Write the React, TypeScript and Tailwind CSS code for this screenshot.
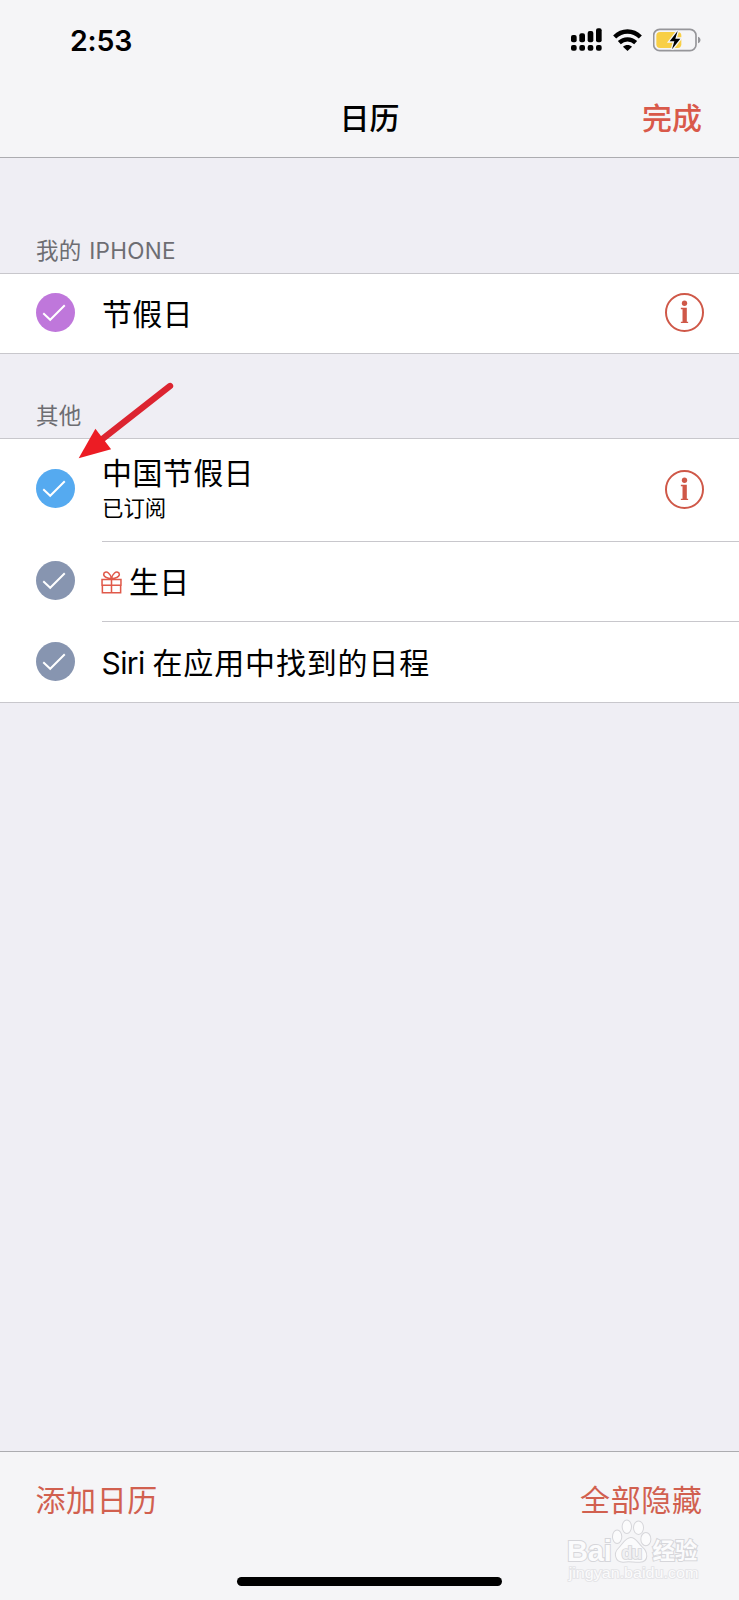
import type { ReactNode } from "react";

const CheckCircle = ({ className }: { className: string }) => {
  return (
    <svg viewBox="0 0 118 118" className={`size-[39px] shrink-0 ${className}`}>
      <circle cx="59" cy="59" r="59" fill="currentColor" />
      <path
        d="M22 61 L43 81 L87 37"
        fill="none"
        stroke="#fff"
        strokeWidth="6"
      />
    </svg>
  );
};

const InfoIcon = () => {
  return (
    <svg viewBox="0 0 118 118" className="size-[39px] text-[#cf5848]">
      <circle
        cx="59"
        cy="59"
        r="56"
        fill="none"
        stroke="currentColor"
        strokeWidth="6"
      />
      <g fill="currentColor">
        <circle cx="59" cy="31" r="8" />
        <path d="M48 45 H66 V87 H70 V91 H48 V87 H53 V49 H48 Z" />
      </g>
    </svg>
  );
};

const GiftIcon = () => {
  return (
    <svg
      viewBox="0 0 62 68"
      className="w-[21px] h-[23px] -ml-px mt-px text-[#e0594a]"
      fill="none"
      stroke="currentColor"
      strokeWidth="4.5"
    >
      <path d="M3 25 H59 V42 H3 Z M4 42 V64 H58 V42 M31 25 V64" />
      <path d="M31 23 C22 22 10 20 8 12 C7 3 16 1 22 6 C27 10 30 17 31 23 C32 17 35 10 40 6 C46 1 55 3 54 12 C52 20 40 22 31 23 Z" />
    </svg>
  );
};

const StatusBar = () => {
  return (
    <div className="h-[78px] pl-[70px] pr-[38px] pt-[28px] flex justify-between items-start">
      <span className="font-['Inter'] text-[28.5px] leading-[26px] font-semibold tracking-[-0.2px]">
        2:53
      </span>
      <div className="flex">
        <svg viewBox="60 54 99 72" className="w-[33px] h-6 mr-[10px]">
          <rect x="63" y="75" width="17" height="22" rx="6" />
          <rect x="88" y="70" width="17" height="27" rx="6" />
          <rect x="113" y="63" width="17" height="34" rx="6" />
          <rect x="138" y="55" width="17" height="42" rx="6" />
          <rect x="63" y="105" width="17" height="17" rx="6" />
          <rect x="88" y="105" width="17" height="17" rx="6" />
          <rect x="113" y="105" width="17" height="17" rx="6" />
          <rect x="138" y="105" width="17" height="17" rx="6" />
        </svg>
        <svg
          viewBox="189 54 87 72"
          className="w-[29px] h-6 mr-[11px]"
          fill="none"
          stroke="#000"
          strokeWidth="13"
        >
          <path d="M194 81 C216 59 249 59 271 81" />
          <path d="M208 98 C222 85 243 85 257 98" />
          <path
            d="M219 110 C226 103 239 103 246 110 L232.500 123 Z"
            fill="#000"
            stroke="none"
          />
        </svg>
        <svg viewBox="309 54 144 72" className="w-12 h-6">
          <rect
            x="311"
            y="58"
            width="127"
            height="64"
            rx="18"
            fill="none"
            stroke="#96969a"
            strokeWidth="5"
          />
          <rect x="319" y="66" width="75" height="48" rx="11" fill="#f8cf46" />
          <path d="M444 80 C454 83 454 97 444 100 Z" fill="#96969a" />
          <path
            d="M383 63 L359 94 H373 L366 118 L391 86 H376 Z"
            stroke="#f5f5f7"
            strokeWidth="8"
            paintOrder="stroke"
          />
        </svg>
      </div>
    </div>
  );
};

const SectionTitle = ({
  className,
  children,
}: {
  className: string;
  children: ReactNode;
}) => {
  return (
    <h2
      className={`pl-9 flex items-end text-[22.5px] leading-8 tracking-[0.3px] text-[#6d6d72] ${className}`}
    >
      {children}
    </h2>
  );
};

// watermark in the bottom right corner
const Watermark = () => {
  return (
    <svg
      viewBox="75 235 410 200"
      className="absolute left-[565px] top-[1518px] w-[137px] h-[67px]"
      fill="#fbfbfc"
      stroke="#d6d6da"
      strokeWidth="3"
    >
      <ellipse cx="231" cy="291" rx="14" ry="20" />
      <ellipse cx="260" cy="261" rx="14" ry="20" />
      <ellipse cx="295" cy="264" rx="15" ry="20" />
      <ellipse cx="317" cy="298" rx="15" ry="20" />
      <path d="M272 293 C287 293 292 308 306 321 C323 335 328 366 299 367 C281 368 268 364 250 367 C224 368 220 340 234 326 C248 312 256 293 272 293 Z" />
      <g
        fontFamily="'Liberation Sans', 'Noto Sans CJK SC', sans-serif"
        fontWeight="bold"
        paintOrder="stroke"
        strokeWidth="6"
      >
        <text x="81" y="364" fontSize="87" textLength="134">
          Bai
        </text>
        <text
          x="244"
          y="357"
          fontSize="54"
          textLength="62"
          fill="#f0f0f2"
          strokeWidth="5"
        >
          du
        </text>
        <text x="337" y="358" fontSize="67" textLength="134">
          经验
        </text>
      </g>
      <text
        x="86"
        y="414"
        fontSize="45"
        textLength="388"
        lengthAdjust="spacingAndGlyphs"
        fontFamily="'Liberation Sans', sans-serif"
        paintOrder="stroke"
        stroke="#e3e3e6"
        strokeWidth="5"
      >
        jingyan.baidu.com
      </text>
    </svg>
  );
};

const App = () => {
  return (
    <div className="relative w-[739px] h-[1600px] overflow-hidden flex flex-col bg-[#efeef4] text-black font-['Inter','Noto_Sans_CJK_SC',sans-serif]">
      <header className="h-[158px] shrink-0 bg-[#f5f5f7] border-b border-[#acacb0]">
        <StatusBar />
        <div className="h-[79px] px-[37px] grid grid-cols-3 items-center text-[30px] leading-10 font-medium">
          <span></span>
          <h1 className="text-center">日历</h1>
          <button className="text-right text-[#d9594a]">完成</button>
        </div>
      </header>

      <main className="grow">
        <SectionTitle className="h-[115px] pb-[6px]">
          我的&nbsp;<span className="pl-px">IPHONE</span>
        </SectionTitle>
        <div className="h-[81px] bg-white border-y border-[#c8c7cc] pl-[35.5px] pr-[35.5px] pb-[2px] flex items-center">
          <CheckCircle className="text-[#bf77db]" />
          <span className="grow pl-[27.5px] pt-[2px] text-[30px] leading-10 tracking-[0.3px]">
            节假日
          </span>
          <InfoIcon />
        </div>

        <SectionTitle className="h-[84px] pb-[6px]">其他</SectionTitle>
        <ul className="bg-white border-y border-[#c8c7cc]">
          <li className="h-[103px] pl-[35.5px] flex">
            <CheckCircle className="mt-[29.5px] text-[#55aaf0]" />
            <div className="grow ml-[27.5px] pr-[35.5px] pb-px border-b border-[#c8c7cc] flex justify-between items-center">
              <div>
                <p className="text-[30px] leading-9 tracking-[0.4px]">
                  中国节假日
                </p>
                <p className="text-[21.4px] leading-[34px]">已订阅</p>
              </div>
              <InfoIcon />
            </div>
          </li>
          <li className="h-20 pl-[35.5px] flex">
            <CheckCircle className="mt-[19px] text-[#8795b0]" />
            <div className="grow ml-[27.5px] border-b border-[#c8c7cc] flex items-center">
              <GiftIcon />
              <span className="pl-[7px] text-[30px] leading-10 tracking-[0.3px]">
                生日
              </span>
            </div>
          </li>
          <li className="h-20 pl-[35.5px] pb-px flex items-center">
            <CheckCircle className="text-[#8795b0]" />
            <span className="pl-[27px] pt-[2px] text-[30px] leading-10 tracking-[0.85px]">
              <span className="tracking-[-0.6px]">Siri </span>
              在应用中找到的日程
            </span>
          </li>
        </ul>
      </main>

      <footer className="h-[149px] shrink-0 bg-[#f5f5f7] border-t border-[#acacb0] flex flex-col justify-between items-center">
        <div className="w-full pl-[35.5px] pr-[36.5px] pt-[28px] flex justify-between text-[30px] leading-10 tracking-[0.6px] text-[#d1604f]">
          <button>添加日历</button>
          <button>全部隐藏</button>
        </div>
        <div className="w-[265px] h-[9px] mb-[14px] rounded-full bg-black"></div>
      </footer>

      <Watermark />

      {/* arrow pointing at the subscribed calendar */}
      <svg
        viewBox="235 35 290 230"
        className="absolute left-[78px] top-[381.5px] w-[97px] h-[77px]"
        fill="#ec1c24"
      >
        <path
          d="M510 47 L310 204"
          stroke="#dc2430"
          strokeWidth="19"
          strokeLinecap="round"
        />
        <path d="M237 263 L287 175 L334 236 Z" />
      </svg>
    </div>
  );
};

export default App;
